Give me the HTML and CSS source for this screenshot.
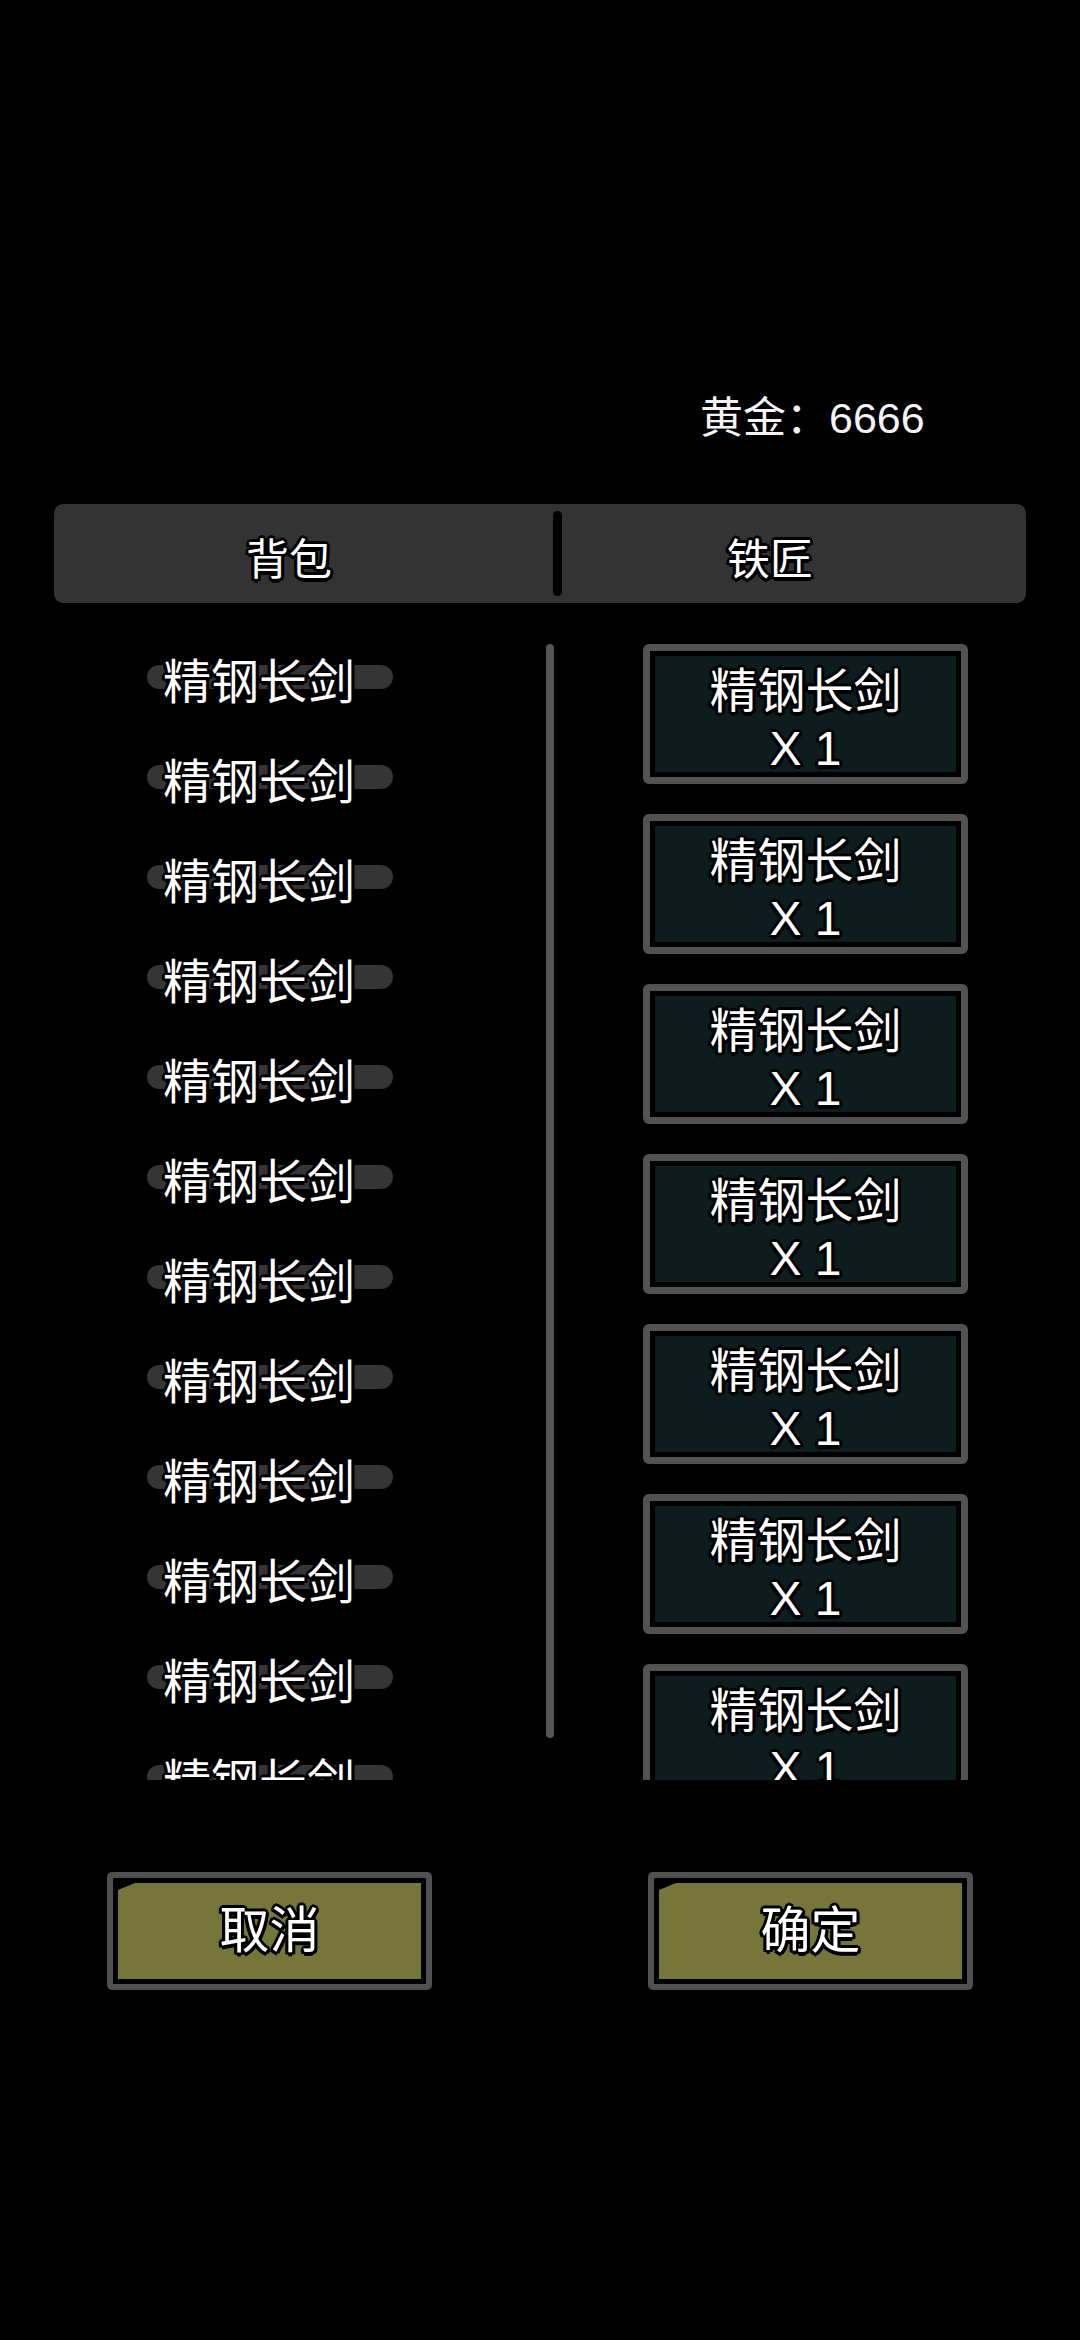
FILE: index.html
```html
<!DOCTYPE html>
<html lang="zh-CN">
<head>
<meta charset="utf-8">
<title>铁匠</title>
<link rel="stylesheet" href="styles.css">
</head>
<body>
<div class="page">
  <div class="gold-row"><span class="gold">黄金：6666</span></div>

  <div class="tabbar">
    <div class="tab tab-left"><span class="outline">背包</span></div>
    <div class="tab-divider"></div>
    <div class="tab tab-right"><span class="outline">铁匠</span></div>
  </div>

  <div class="content">
    <div class="bag">
      <div class="bag-item"><span class="pill"></span><span class="bag-name outline">精钢长剑</span></div>
      <div class="bag-item"><span class="pill"></span><span class="bag-name outline">精钢长剑</span></div>
      <div class="bag-item"><span class="pill"></span><span class="bag-name outline">精钢长剑</span></div>
      <div class="bag-item"><span class="pill"></span><span class="bag-name outline">精钢长剑</span></div>
      <div class="bag-item"><span class="pill"></span><span class="bag-name outline">精钢长剑</span></div>
      <div class="bag-item"><span class="pill"></span><span class="bag-name outline">精钢长剑</span></div>
      <div class="bag-item"><span class="pill"></span><span class="bag-name outline">精钢长剑</span></div>
      <div class="bag-item"><span class="pill"></span><span class="bag-name outline">精钢长剑</span></div>
      <div class="bag-item"><span class="pill"></span><span class="bag-name outline">精钢长剑</span></div>
      <div class="bag-item"><span class="pill"></span><span class="bag-name outline">精钢长剑</span></div>
      <div class="bag-item"><span class="pill"></span><span class="bag-name outline">精钢长剑</span></div>
      <div class="bag-item"><span class="pill"></span><span class="bag-name outline">精钢长剑</span></div>
    </div>
    <div class="scrollbar"></div>
    <div class="forge">
      <div class="card"><div class="card-inner"><span class="outline">精钢长剑</span><span class="outline">X 1</span></div></div>
      <div class="card"><div class="card-inner"><span class="outline">精钢长剑</span><span class="outline">X 1</span></div></div>
      <div class="card"><div class="card-inner"><span class="outline">精钢长剑</span><span class="outline">X 1</span></div></div>
      <div class="card"><div class="card-inner"><span class="outline">精钢长剑</span><span class="outline">X 1</span></div></div>
      <div class="card"><div class="card-inner"><span class="outline">精钢长剑</span><span class="outline">X 1</span></div></div>
      <div class="card"><div class="card-inner"><span class="outline">精钢长剑</span><span class="outline">X 1</span></div></div>
      <div class="card"><div class="card-inner"><span class="outline">精钢长剑</span><span class="outline">X 1</span></div></div>
    </div>
  </div>

  <div class="actions">
    <div class="btn"><div class="btn-inner"><span class="outline btn-text">取消</span></div></div>
    <div class="btn"><div class="btn-inner"><span class="outline btn-text">确定</span></div></div>
  </div>
</div>
</body>
</html>
```

FILE: styles.css
```css
* { box-sizing: border-box; }

html, body {
  margin: 0;
  padding: 0;
  background: #000;
}

body {
  width: 1080px;
  height: 2340px;
  overflow: hidden;
  color: #fff;
  font-family: "Liberation Sans", "Noto Sans CJK SC", sans-serif;
}

.page {
  padding-top: 394px;
}

.outline {
  text-shadow:
    -3px 0 0 #000, 3px 0 0 #000, 0 -3px 0 #000, 0 3px 0 #000,
    -2px -2px 0 #000, 2px -2px 0 #000, -2px 2px 0 #000, 2px 2px 0 #000,
    -3px 2px 0 #000, 3px 2px 0 #000, 0 4px 0 #000;
}

/* gold */
.gold-row {
  display: flex;
  justify-content: flex-start;
  padding-left: 700px;
  height: 48px;
}
.gold {
  font-size: 43px;
  line-height: 48px;
  color: #f4f4f4;
}

/* tabs */
.tabbar {
  margin: 62px 54px 0 54px;
  height: 99px;
  background: #333333;
  border-radius: 9px;
  display: flex;
  align-items: center;
}
.tab {
  height: 99px;
  display: flex;
  align-items: center;
  justify-content: center;
  font-size: 43px;
  line-height: 50px;
  padding-top: 12px;
}
.tab-left {
  width: 499px;
  padding-right: 29px;
}
.tab-right {
  flex: 1;
  padding-right: 48px;
}
.tab-divider {
  width: 9px;
  height: 85px;
  background: #000;
  border-radius: 5px;
}

/* content */
.content {
  margin-top: 41px;
  height: 1136px;
  overflow: hidden;
  display: flex;
  align-items: flex-start;
}
.bag {
  width: 546px;
  height: 1136px;
  overflow: hidden;
}
.bag-item {
  position: relative;
  height: 100px;
  padding-left: 163px;
  padding-top: 4px;
}
.pill {
  position: absolute;
  left: 147px;
  top: 21px;
  width: 246px;
  height: 24px;
  border-radius: 12px;
  background: #353535;
}
.bag-name {
  position: relative;
  display: block;
  font-size: 48px;
  line-height: 70px;
  white-space: nowrap;
}
.scrollbar {
  width: 8px;
  height: 1094px;
  background: #555555;
  border-radius: 4px;
  flex-shrink: 0;
}
.forge {
  margin-left: 89px;
  width: 325px;
  display: flex;
  flex-direction: column;
  gap: 30px;
}
.card {
  height: 140px;
  border: 7px solid #525252;
  border-radius: 6px;
  background: #000;
  padding: 5px;
  flex-shrink: 0;
}
.card-inner {
  height: 100%;
  background: #0d1c1c;
  display: flex;
  flex-direction: column;
  align-items: center;
  padding-top: 7px;
  font-size: 48px;
  line-height: 57px;
  white-space: nowrap;
  overflow: hidden;
}

/* buttons */
.actions {
  margin-top: 92px;
  padding-left: 107px;
  display: flex;
  gap: 216px;
}
.btn {
  width: 325px;
  height: 118px;
  border: 6px solid #505050;
  border-radius: 5px;
  background: #000;
  padding: 5px;
}
.btn-inner {
  height: 100%;
  background: #77763a;
  clip-path: polygon(17px 0, 100% 0, 100% 100%, 0 100%, 0 7px);
  display: flex;
  align-items: center;
  justify-content: center;
}
.btn-text {
  font-size: 50px;
  line-height: 60px;
  font-weight: 400;
}
```
